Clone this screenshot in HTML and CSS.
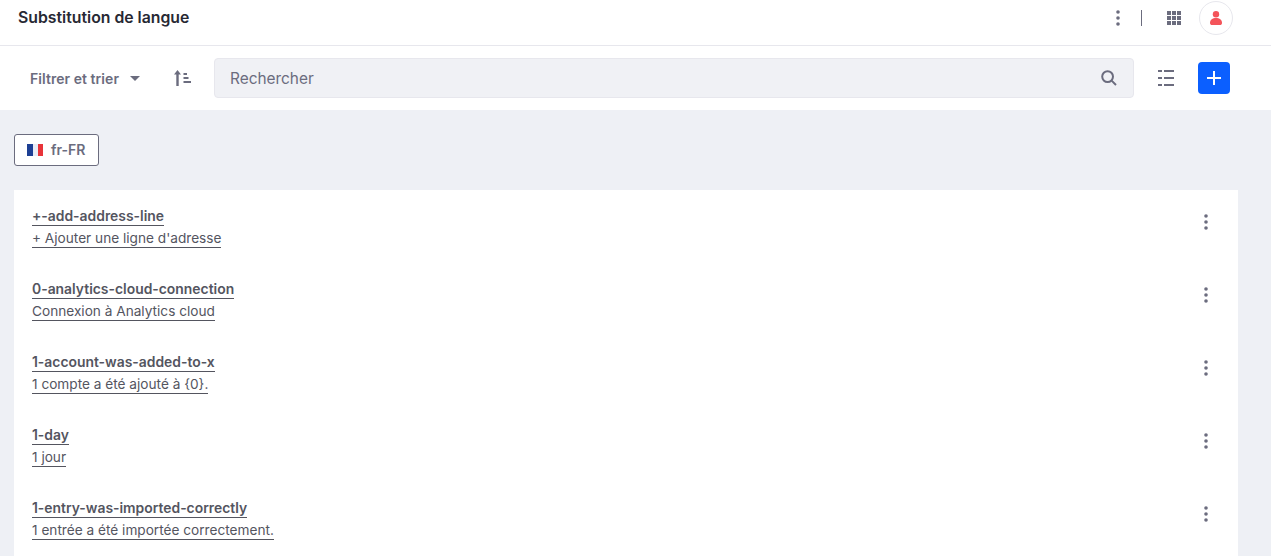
FILE: index.html
```html
<!DOCTYPE html>
<html lang="fr">
<head>
    <meta charset="UTF-8">
    <title>Substitution de langue</title>
    <link rel="stylesheet" href="styles.css">
</head>
<body>
    <!-- Top bar -->
    <header class="topbar">
        <h1 class="page-title">Substitution de langue</h1>
        <div class="topbar-actions">
            <svg class="icon-kebab" width="4" height="16" viewBox="0 0 4 16"><circle cx="2" cy="2" r="1.8"/><circle cx="2" cy="8" r="1.8"/><circle cx="2" cy="14" r="1.8"/></svg>
            <span class="divider"></span>
            <svg class="icon-apps" width="14" height="14" viewBox="0 0 14 14"><rect x="0" y="0" width="4" height="4"/><rect x="5" y="0" width="4" height="4"/><rect x="10" y="0" width="4" height="4"/><rect x="0" y="5" width="4" height="4"/><rect x="5" y="5" width="4" height="4"/><rect x="10" y="5" width="4" height="4"/><rect x="0" y="10" width="4" height="4"/><rect x="5" y="10" width="4" height="4"/><rect x="10" y="10" width="4" height="4"/></svg>
            <span class="avatar">
                <svg width="12" height="14" viewBox="0 0 12 14"><circle cx="6" cy="3.2" r="3.2"/><path d="M0 12 C0 8.5 2.5 7 6 7 C9.5 7 12 8.5 12 12 C12 13.4 11 14 10 14 H2 C1 14 0 13.4 0 12 Z"/></svg>
            </span>
        </div>
    </header>

    <!-- Management toolbar -->
    <div class="toolbar">
        <button class="filter-btn">Filtrer et trier <span class="caret"></span></button>
        <svg class="icon-sort" width="17" height="16" viewBox="0 0 17 16"><path d="M3.5 0 L7 4.5 H4.7 V16 H2.3 V4.5 H0 Z"/><rect x="9.5" y="3" width="3.5" height="2"/><rect x="9.5" y="7" width="5" height="2"/><rect x="9.5" y="11" width="7.5" height="2"/></svg>
        <div class="search">
            <span class="search-text">Rechercher</span>
            <svg class="icon-search" width="16" height="16" viewBox="0 0 16 16"><circle cx="6.6" cy="6.6" r="5.4"/><path d="M10.6 10.6 L15 15"/></svg>
        </div>
        <svg class="icon-list" width="16" height="16" viewBox="0 0 16 16"><rect x="0" y="0" width="4" height="2"/><rect x="6" y="0" width="10" height="2"/><rect x="0" y="7" width="4" height="2"/><rect x="6" y="7" width="10" height="2"/><rect x="0" y="14" width="4" height="2"/><rect x="6" y="14" width="10" height="2"/></svg>
        <button class="add-btn">
            <svg width="16" height="16" viewBox="0 0 16 16"><path d="M8 1 V15 M1 8 H15"/></svg>
        </button>
    </div>

    <main class="content">
        <button class="locale-btn">
            <svg width="16" height="12" viewBox="0 0 16 12"><rect x="0" width="6" height="12" fill="#1d3f94"/><rect x="6" width="5" height="12" fill="#e8ecf6"/><rect x="11" width="5" height="12" fill="#e8343a"/></svg>
            fr-FR
        </button>

        <ul class="entry-list">
            <li class="entry">
                <div class="entry-text"><a class="entry-key">+-add-address-line</a><a class="entry-value">+ Ajouter une ligne d'adresse</a></div>
                <svg class="icon-kebab" width="4" height="16" viewBox="0 0 4 16"><circle cx="2" cy="2" r="1.8"/><circle cx="2" cy="8" r="1.8"/><circle cx="2" cy="14" r="1.8"/></svg>
            </li>
            <li class="entry">
                <div class="entry-text"><a class="entry-key">0-analytics-cloud-connection</a><a class="entry-value">Connexion à Analytics cloud</a></div>
                <svg class="icon-kebab" width="4" height="16" viewBox="0 0 4 16"><circle cx="2" cy="2" r="1.8"/><circle cx="2" cy="8" r="1.8"/><circle cx="2" cy="14" r="1.8"/></svg>
            </li>
            <li class="entry">
                <div class="entry-text"><a class="entry-key">1-account-was-added-to-x</a><a class="entry-value">1 compte a été ajouté à {0}.</a></div>
                <svg class="icon-kebab" width="4" height="16" viewBox="0 0 4 16"><circle cx="2" cy="2" r="1.8"/><circle cx="2" cy="8" r="1.8"/><circle cx="2" cy="14" r="1.8"/></svg>
            </li>
            <li class="entry">
                <div class="entry-text"><a class="entry-key">1-day</a><a class="entry-value">1 jour</a></div>
                <svg class="icon-kebab" width="4" height="16" viewBox="0 0 4 16"><circle cx="2" cy="2" r="1.8"/><circle cx="2" cy="8" r="1.8"/><circle cx="2" cy="14" r="1.8"/></svg>
            </li>
            <li class="entry">
                <div class="entry-text"><a class="entry-key">1-entry-was-imported-correctly</a><a class="entry-value">1 entrée a été importée correctement.</a></div>
                <svg class="icon-kebab" width="4" height="16" viewBox="0 0 4 16"><circle cx="2" cy="2" r="1.8"/><circle cx="2" cy="8" r="1.8"/><circle cx="2" cy="14" r="1.8"/></svg>
            </li>
        </ul>
    </main>
</body>
</html>
```

FILE: styles.css
```css
* {
    margin: 0;
    padding: 0;
    box-sizing: border-box;
}

html, body {
    height: 556px;
    overflow: hidden;
}

body {
    font-family: Inter, 'Noto Sans', sans-serif;
    background: #eef0f5;
    color: #54555f;
}

svg {
    display: block;
    flex: none;
    fill: #6b6c7e;
}

button {
    font-family: inherit;
    border: none;
    background: none;
}

.topbar {
    height: 46px;
    background: #fff;
    border-bottom: 1px solid #e7e7ed;
    display: flex;
    align-items: center;
    justify-content: space-between;
    padding: 0 38px 9px 18px;
}

.page-title {
    font-size: 15.8px;
    line-height: 19px;
    font-weight: 600;
    color: #272833;
    padding-bottom: 2px;
}

.topbar-actions {
    display: flex;
    align-items: center;
}

.divider {
    width: 1px;
    height: 16px;
    background: #6b6c7e;
    margin: 0 25px 0 21px;
}

.icon-apps {
    margin-right: 18px;
}

.avatar {
    width: 34px;
    height: 34px;
    border: 1px solid #e7e7ed;
    border-radius: 50%;
    display: flex;
    align-items: center;
    justify-content: center;
}

.avatar svg {
    fill: #f4545a;
}

.toolbar {
    height: 64px;
    background: #fff;
    display: flex;
    align-items: center;
    padding: 0 41px 0 30px;
}

.filter-btn {
    font-size: 14px;
    letter-spacing: 0.05px;
    font-weight: 600;
    color: #6b6c7e;
    display: flex;
    align-items: center;
    gap: 11px;
    margin-right: 34px;
}

.caret {
    width: 0;
    height: 0;
    border-left: 5px solid transparent;
    border-right: 5px solid transparent;
    border-top: 5px solid #6b6c7e;
}

.icon-sort {
    margin-right: 23px;
}

.search {
    flex: 1;
    height: 40px;
    background: #f0f1f5;
    border: 1px solid #e7e7ed;
    border-radius: 4px;
    display: flex;
    align-items: center;
    justify-content: space-between;
    padding: 0 16px 0 15px;
    margin-right: 24px;
}

.search-text {
    font-size: 15.4px;
    color: #6b6c7e;
}

.icon-search {
    fill: none;
    stroke: #6b6c7e;
    stroke-width: 2;
}

.icon-list {
    margin-right: 24px;
}

.add-btn {
    width: 32px;
    height: 32px;
    background: #0b5fff;
    border-radius: 4px;
    display: flex;
    align-items: center;
    justify-content: center;
}

.add-btn svg {
    fill: none;
    stroke: #fff;
    stroke-width: 2;
}

.content {
    padding: 24px 33px 0 14px;
}

.locale-btn {
    height: 32px;
    width: 85px;
    background: #fff;
    border: 1px solid #6b6c7e;
    border-radius: 3px;
    font-size: 14px;
    font-weight: 600;
    color: #6b6c7e;
    display: flex;
    align-items: center;
    gap: 8px;
    padding: 0 0 1px 12px;
    margin-bottom: 24px;
}

.entry-list {
    list-style: none;
    background: #fff;
    padding-bottom: 20px;
}

.entry {
    height: 73px;
    display: flex;
    justify-content: space-between;
    padding: 18px 30px 0 18px;
}

.entry .icon-kebab {
    margin-top: 6px;
}

.entry-text {
    display: flex;
    flex-direction: column;
    align-items: flex-start;
}

.entry-key,
.entry-value {
    line-height: 17px;
    color: #54555f;
    border-bottom: 1px solid #54555f;
}

.entry-key {
    font-size: 13.9px;
    font-weight: 600;
    margin-bottom: 4px;
}

.entry-value {
    font-size: 13.65px;
}
```
